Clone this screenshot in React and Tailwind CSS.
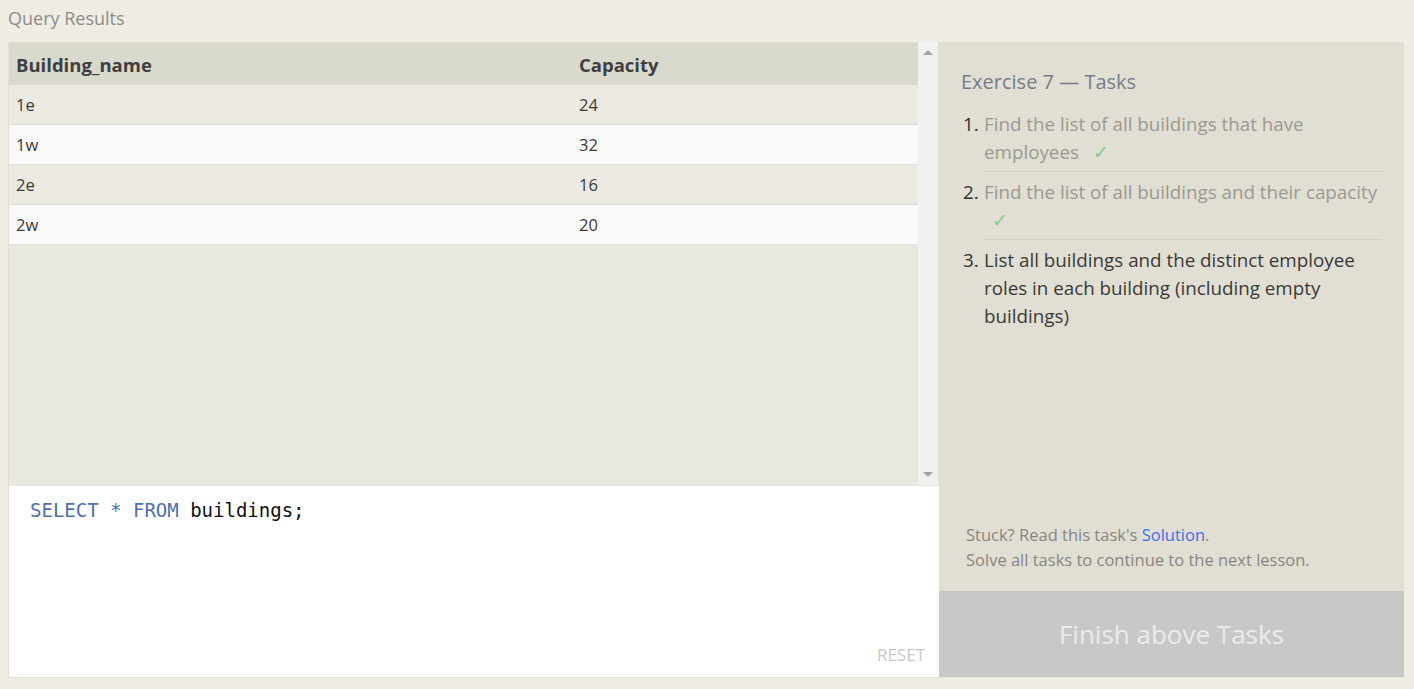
const ROWS = [
  { name: '1e', capacity: 24 },
  { name: '1w', capacity: 32 },
  { name: '2e', capacity: 16 },
  { name: '2w', capacity: 20 },
]

const TASKS = [
  { text: 'Find the list of all buildings that have employees', done: true, check: 'inline' },
  { text: 'Find the list of all buildings and their capacity', done: true, check: 'block' },
  { text: 'List all buildings and the distinct employee roles in each building (including empty buildings)', done: false },
]

function Check({ block }) {
  return (
    <span className={`text-[#8cc98c] ${block ? 'block pl-[8px]' : 'ml-[14px]'}`}>✓</span>
  )
}

export default function App() {
  return (
    <div
      className="w-full h-[689px] bg-[#efece4] flex flex-col"
      style={{ fontFamily: '"Open Sans", "Noto Sans", sans-serif' }}
    >
      <div className="h-[42px] px-[8px] pt-[5px] text-[18px] leading-[26px] text-[#8c8c88]">Query Results</div>

      <div className="flex h-[636px] pr-[10px]">
        {/* left: results + editor */}
        <div className="w-[931px] ml-[8px] flex flex-col border-l border-b border-[#e2dfd6]">
          <div className="h-[443px] flex bg-[#e9e8e0]">
            <div className="flex-1">
              <div className="flex h-[43px] pt-[2px] bg-[#dad9ce] items-center text-[18.5px] font-bold text-[#3f3f3f] border-t border-[#e2dfd6]">
                <div className="w-[563px] pl-[7px]">Building_name</div>
                <div className="flex-1 pl-[7px]">Capacity</div>
              </div>
              {ROWS.map((r, i) => (
                <div
                  key={r.name}
                  className={`flex h-[40px] pt-[2px] items-center text-[16.5px] text-[#3d3a36] border-b ${
                    i % 2 === 0 ? 'bg-[#ebe9e2] border-[#dcdcd8]' : 'bg-[#f9f9f8] border-[#e0e0dc]'
                  }`}
                >
                  <div className="w-[563px] pl-[7px]">{r.name}</div>
                  <div className="flex-1 pl-[7px]">{r.capacity}</div>
                </div>
              ))}
            </div>
            <div className="w-[21px] bg-[#f1f1f1] flex flex-col items-center justify-between py-[8px] border-r border-[#e6e3da]">
              <div className="w-0 h-0 border-l-[5px] border-r-[5px] border-b-[5px] border-l-transparent border-r-transparent border-b-[#a3a3a3]" />
              <div className="w-0 h-0 border-l-[5px] border-r-[5px] border-t-[5px] border-l-transparent border-r-transparent border-t-[#a3a3a3]" />
            </div>
          </div>
          <div className="flex-1 bg-white border-t border-[#e6e6e2] relative">
            <div
              className="pt-[10px] pl-[21px] text-[19px]"
              style={{ fontFamily: '"DejaVu Sans Mono", "Liberation Mono", monospace' }}
            >
              <span className="text-[#4d70ad]">SELECT</span>
              <span className="text-[#4d70ad]"> * </span>
              <span className="text-[#4d70ad]">FROM</span>
              <span className="text-[#111]"> buildings;</span>
            </div>
            <div className="absolute right-[14px] bottom-[10px] text-[17px] text-[#c9c9c9]">RESET</div>
          </div>
        </div>

        {/* right: tasks */}
        <div className="flex-1 bg-[#e1dfd4] flex flex-col border-b border-[#e6e3da]">
          <div className="flex-1 flex flex-col px-[22px] pt-[25px]">
            <h2 className="text-[20px] leading-[30px] text-[#787b85] mb-[13px]">Exercise 7 — Tasks</h2>
            <ol className="text-[18.8px] leading-[28px]">
              {TASKS.map((t, i) => (
                <li key={i} className="flex">
                  <span className="w-[23px] shrink-0 text-[#2f2f2f] pl-[2px]">{i + 1}.</span>
                  <div
                    className={`flex-1 pb-[5px] mb-[6px] ${
                      i < TASKS.length - 1 ? 'border-b border-[#d3d0c5]' : ''
                    } ${t.done ? 'text-[#9a9992]' : 'text-[#3a3936]'}`}
                  >
                    {t.text}
                    {t.done && <Check block={t.check === 'block'} />}
                  </div>
                </li>
              ))}
            </ol>
            <div className="mt-auto pb-[19px] pl-[5px] text-[16.5px] leading-[25px] text-[#8a857f]">
              <div>
                Stuck? Read this task's <span className="text-[#3d6ff0]">Solution</span>.
              </div>
              <div>Solve all tasks to continue to the next lesson.</div>
            </div>
          </div>
          <div className="h-[86px] bg-[#c8c8c8] flex items-center justify-center text-[26px] text-[#ebebeb]">
            Finish above Tasks
          </div>
        </div>
      </div>
    </div>
  )
}
